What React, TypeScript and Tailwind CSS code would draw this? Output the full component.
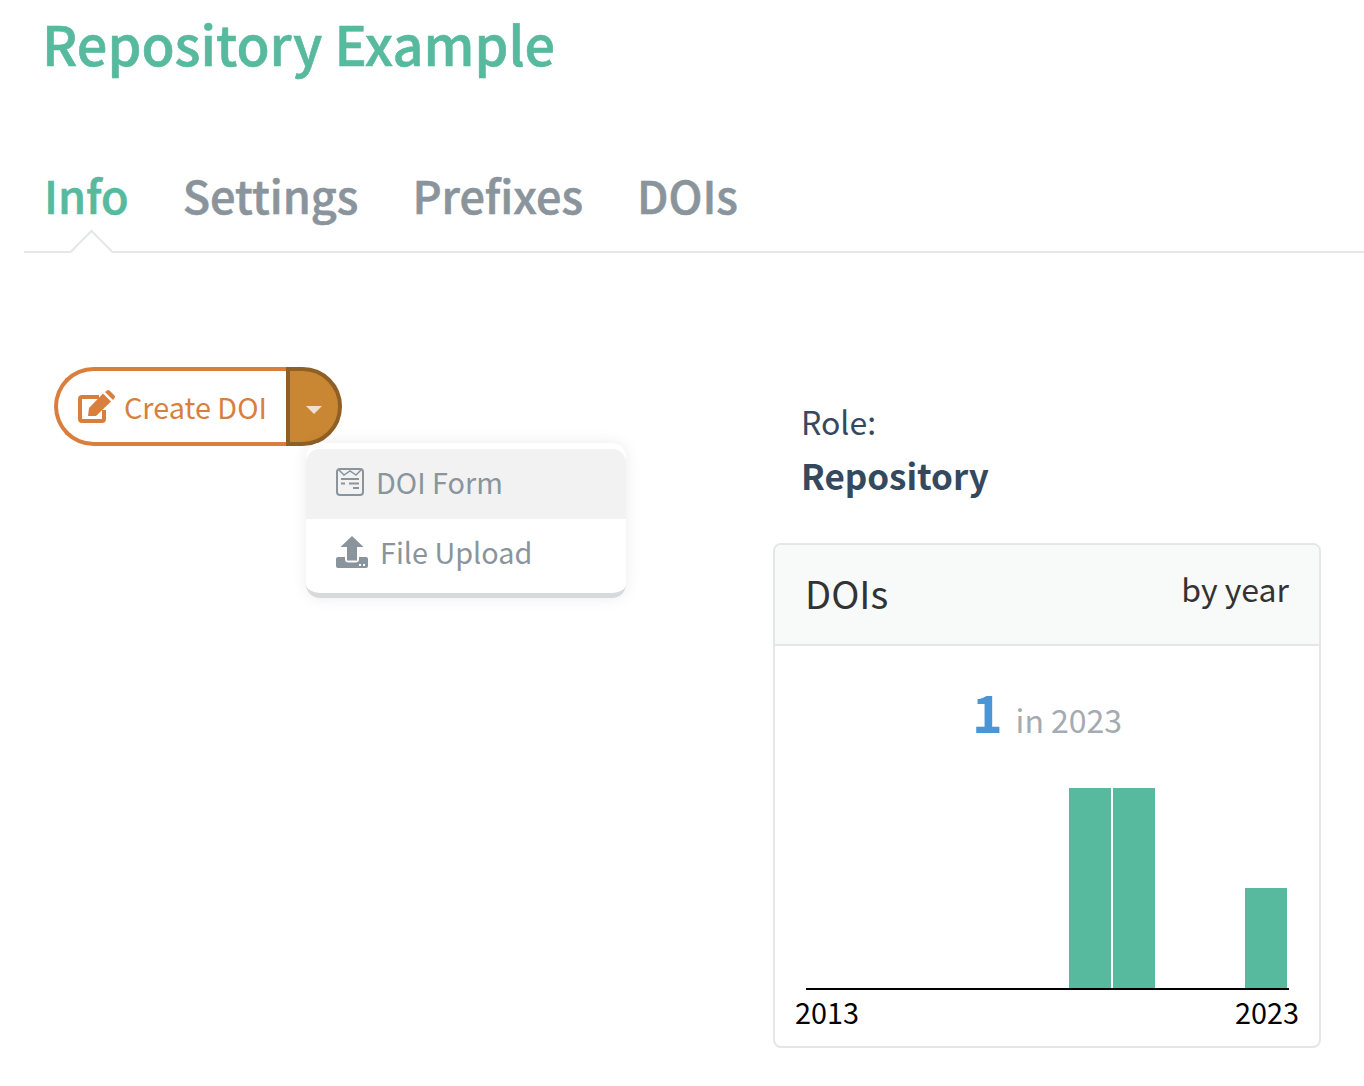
function EditIcon() {
  return (
    <svg viewBox="0 0 38 34" className="w-[38px] h-[34px]">
      <path d="M26 20v9a2 2 0 0 1-2 2H4a2 2 0 0 1-2-2V9a2 2 0 0 1 2-2h17" fill="none" stroke="#d97f3d" strokeWidth="4" />
      <path d="M10 26l1-8L25 3.500l8 8L18 26z" fill="#d97f3d" />
      <path d="M27 2l2-1.500a2 2 0 0 1 2.500 0l5 5a2 2 0 0 1 0 2.500L35 10z" fill="#d97f3d" />
    </svg>
  );
}

function FormIcon() {
  return (
    <svg viewBox="0 0 28 28" className="w-[28px] h-[28px]" fill="none" stroke="#8a949c" strokeWidth="2">
      <rect x="1" y="1" width="26" height="26" rx="3" />
      <path d="M3 2l5 5 6-4 6 4 5-5" strokeWidth="1.500" />
      <path d="M5 11h18M5 15.500h4M13 15.500h10M17 20h6" />
    </svg>
  );
}

function UploadIcon() {
  return (
    <svg viewBox="0 0 32 32" className="w-[32px] h-[32px]" fill="#8a949c">
      <path d="M16 0l11.500 11H21v13.500H11V11H4.500z" />
      <path d="M0 23a2 2 0 0 1 2-2h7v2a3.500 3.500 0 0 0 3.500 3.500h7a3.500 3.500 0 0 0 3.500-3.500v-2h7a2 2 0 0 1 2 2v7a2 2 0 0 1-2 2H2a2 2 0 0 1-2-2z" />
      <rect x="23" y="28" width="2" height="2" fill="#fff" />
      <rect x="27" y="28" width="2" height="2" fill="#fff" />
    </svg>
  );
}

function Chart() {
  return (
    <svg viewBox="0 0 544 270" className="w-[544px] h-[270px] block">
      <rect x="294" y="11" width="42" height="200" fill="#57b99d" />
      <rect x="338" y="11" width="42" height="200" fill="#57b99d" />
      <rect x="470" y="111" width="42" height="100" fill="#57b99d" />
      <rect x="31" y="211" width="483" height="2" fill="#000" />
      <text x="20" y="247" fontSize="28.8" fill="#000">2013</text>
      <text x="460" y="247" fontSize="28.8" fill="#000">2023</text>
    </svg>
  );
}

export default function App() {
  return (
    <div className="w-[1364px] h-[1086px] overflow-hidden bg-white font-['Noto_Sans_CJK_SC','Liberation_Sans',sans-serif] text-[#34495e]">
      <h1 className="pl-[42px] pt-[10px] text-[54px] leading-[66px] font-medium [-webkit-text-stroke:0.6px] text-[#57b99d]">Repository Example</h1>

      <div className="relative ml-[24px] mt-[89px] h-[88px] border-b-2 border-[#e4e6e7] flex gap-[54px] pl-[20px] text-[45px] leading-[60px] font-medium [-webkit-text-stroke:0.6px] text-[#8a949c]">
        <span className="text-[#57b99d]">Info</span>
        <span>Settings</span>
        <span>Prefixes</span>
        <span>DOIs</span>
        <div className="absolute left-[52px] top-[71px] w-[31px] h-[31px] rotate-45 bg-white border-l-2 border-t-2 border-[#e4e6e7]" />
      </div>

      <div className="flex mt-[114px]">
        <div className="relative w-[774px] pl-[54px]">
          <div className="flex h-[79px] w-[288px]">
            <div className="flex items-center gap-[8px] w-[233px] pl-[20px] border-[4px] border-r-0 border-[#d97f3d] rounded-l-[40px] text-[#d97f3d] text-[28.8px]">
              <EditIcon />
              <span>Create DOI</span>
            </div>
            <div className="flex items-center justify-center -ml-[1px] w-[56px] bg-[#c98733] border-[4px] border-[#8f5f26] rounded-r-[40px] pt-[6px]">
              <div className="w-0 h-0 border-x-[8px] border-x-transparent border-t-[8px] border-t-[#f1e0cc]" />
            </div>
          </div>

          <div className="absolute left-[306px] top-[76px] w-[320px] pt-[6px] pb-[4px] bg-white rounded-[14px] border-b-[5px] border-[#d8d9da] shadow-[0_0_16px_rgba(0,0,0,0.08)] text-[#8a949c] text-[28.8px]">
            <div className="flex items-center gap-[12px] h-[70px] pl-[30px] pb-[4px] bg-[#f2f2f2] rounded-t-[14px]">
              <FormIcon />
              <span>DOI Form</span>
            </div>
            <div className="flex items-center gap-[12px] h-[70px] pl-[30px] pb-[4px]">
              <UploadIcon />
              <span>File Upload</span>
            </div>
          </div>
        </div>

        <div className="w-[548px] -ml-[1px] mt-[32px]">
          <div className="pl-[28px] text-[32px] leading-[44px]">Role:</div>
          <div className="pl-[28px] mt-[10px] text-[35px] leading-[44px] font-bold">Repository</div>

          <div className="mt-[46px] border-2 border-[#e4e6e7] rounded-[8px] h-[505px]">
            <div className="flex justify-between h-[101px] px-[30px] bg-[#f8faf9] border-b-2 border-[#e4e6e7] rounded-t-[6px] text-[#333]">
              <span className="text-[38px] leading-[96px]">DOIs</span>
              <span className="text-[32px] leading-[86px]">by year</span>
            </div>
            <div className="flex items-baseline justify-center h-[131px] pt-[30px] gap-[13px]">
              <span className="text-[52px] leading-[70px] font-bold text-[#4a95d6]">1</span>
              <span className="text-[32px] text-[#a4abb1]">in 2023</span>
            </div>
            <Chart />
          </div>
        </div>
      </div>
    </div>
  );
}
